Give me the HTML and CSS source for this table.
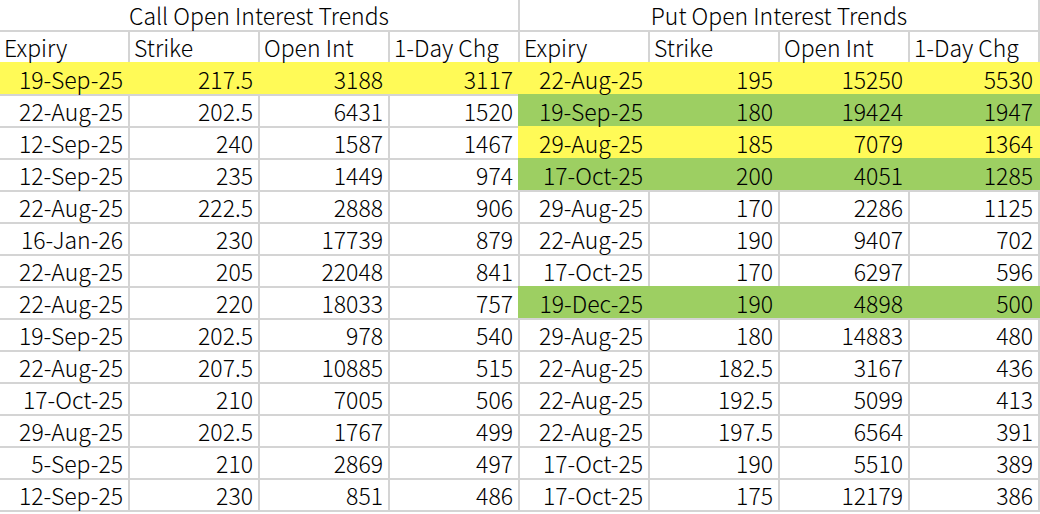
FILE: index.html
```html
<!DOCTYPE html>
<html>
<head>
<meta charset="utf-8">
<link rel="stylesheet" href="styles.css">
</head>
<body>
<table class="sheet">
  <colgroup>
    <col class="c"><col class="c"><col class="c"><col class="c">
    <col class="c"><col class="c"><col class="c"><col class="c last">
  </colgroup>
  <tr class="title">
    <td colspan="4">Call Open Interest Trends</td>
    <td colspan="4">Put Open Interest Trends</td>
  </tr>
  <tr class="head">
    <td>Expiry</td><td>Strike</td><td>Open Int</td><td>1-Day Chg</td>
    <td>Expiry</td><td>Strike</td><td>Open Int</td><td>1-Day Chg</td>
  </tr>
  <tr>
    <td class="y">19-Sep-25</td><td class="y">217.5</td><td class="y">3188</td><td class="y">3117</td>
    <td class="y">22-Aug-25</td><td class="y">195</td><td class="y">15250</td><td class="y">5530</td>
  </tr>
  <tr>
    <td>22-Aug-25</td><td>202.5</td><td>6431</td><td>1520</td>
    <td class="g">19-Sep-25</td><td class="g">180</td><td class="g">19424</td><td class="g">1947</td>
  </tr>
  <tr>
    <td>12-Sep-25</td><td>240</td><td>1587</td><td>1467</td>
    <td class="y">29-Aug-25</td><td class="y">185</td><td class="y">7079</td><td class="y">1364</td>
  </tr>
  <tr>
    <td>12-Sep-25</td><td>235</td><td>1449</td><td>974</td>
    <td class="g">17-Oct-25</td><td class="g">200</td><td class="g">4051</td><td class="g">1285</td>
  </tr>
  <tr>
    <td>22-Aug-25</td><td>222.5</td><td>2888</td><td>906</td>
    <td>29-Aug-25</td><td>170</td><td>2286</td><td>1125</td>
  </tr>
  <tr>
    <td>16-Jan-26</td><td>230</td><td>17739</td><td>879</td>
    <td>22-Aug-25</td><td>190</td><td>9407</td><td>702</td>
  </tr>
  <tr>
    <td>22-Aug-25</td><td>205</td><td>22048</td><td>841</td>
    <td>17-Oct-25</td><td>170</td><td>6297</td><td>596</td>
  </tr>
  <tr>
    <td>22-Aug-25</td><td>220</td><td>18033</td><td>757</td>
    <td class="g">19-Dec-25</td><td class="g">190</td><td class="g">4898</td><td class="g">500</td>
  </tr>
  <tr>
    <td>19-Sep-25</td><td>202.5</td><td>978</td><td>540</td>
    <td>29-Aug-25</td><td>180</td><td>14883</td><td>480</td>
  </tr>
  <tr>
    <td>22-Aug-25</td><td>207.5</td><td>10885</td><td>515</td>
    <td>22-Aug-25</td><td>182.5</td><td>3167</td><td>436</td>
  </tr>
  <tr>
    <td>17-Oct-25</td><td>210</td><td>7005</td><td>506</td>
    <td>22-Aug-25</td><td>192.5</td><td>5099</td><td>413</td>
  </tr>
  <tr>
    <td>29-Aug-25</td><td>202.5</td><td>1767</td><td>499</td>
    <td>22-Aug-25</td><td>197.5</td><td>6564</td><td>391</td>
  </tr>
  <tr>
    <td>5-Sep-25</td><td>210</td><td>2869</td><td>497</td>
    <td>17-Oct-25</td><td>190</td><td>5510</td><td>389</td>
  </tr>
  <tr>
    <td>12-Sep-25</td><td>230</td><td>851</td><td>486</td>
    <td>17-Oct-25</td><td>175</td><td>12179</td><td>386</td>
  </tr>
  <tr class="empty">
    <td></td><td></td><td></td><td></td><td></td><td></td><td></td><td></td>
  </tr>
</table>
</body>
</html>
```

FILE: styles.css
```css
html, body {
  margin: 0;
  padding: 0;
  background: #ffffff;
}

.sheet {
  border-collapse: separate;
  border-spacing: 0;
  table-layout: fixed;
  margin: -2px 0 0 -2px;
  font-family: "Noto Sans CJK SC", "Noto Sans", sans-serif;
  font-weight: 300;
  font-size: 23px;
  color: #000000;
  width: 1042px;
}

.sheet .c {
  width: 130px;
}

.sheet .last {
  width: 132px;
}

.sheet td {
  height: 30px;
  padding: 0 5px 0 4px;
  border-top: 2px solid #d4d4d4;
  border-left: 2px solid #d4d4d4;
  text-align: right;
  white-space: nowrap;
  line-height: 30px;
  box-sizing: content-box;
}

.sheet td:last-child {
  border-right: 2px solid #d4d4d4;
}

.sheet .title td {
  text-align: center;
  border-top-color: #ffffff;
  padding: 0;
}

.sheet .title td:first-child {
  border-left-color: #ffffff;
}

.sheet .head td {
  text-align: left;
}

.sheet td.y {
  background: #fffa57;
  border-top-color: #fffa57;
  border-left-color: #fffa57;
}

.sheet td.g {
  background: #9dcf62;
  border-top-color: #9dcf62;
  border-left-color: #9dcf62;
}

.sheet td.y:last-child {
  border-right-color: #fffa57;
}

.sheet td.g:last-child {
  border-right-color: #9dcf62;
}

.sheet .empty td {
  height: 0;
  line-height: 0;
}
```
